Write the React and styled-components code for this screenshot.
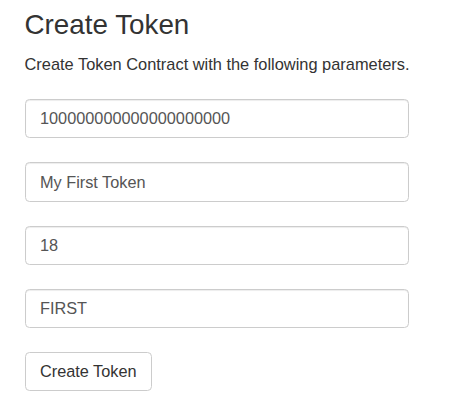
import React from "react";
import styled, { createGlobalStyle } from "styled-components";

const GlobalStyle = createGlobalStyle`
  html, body {
    margin: 0;
    padding: 0;
    background: #fff;
  }
  body {
    font-family: "Liberation Sans", Arial, Helvetica, sans-serif;
    color: #333;
  }
`;

const Page = styled.div`
  width: 384px;
  padding: 9px 0 0 24.5px;
`;

const Title = styled.h3`
  margin: 0;
  font-size: 27.8px;
  line-height: 31px;
  font-weight: 500;
  color: #333;
`;

const Lead = styled.p`
  margin: 12.8px 0 0;
  font-size: 16.4px;
  line-height: 23px;
  white-space: nowrap;
  color: #333;
`;

const Form = styled.form`
  display: flex;
  flex-direction: column;
  align-items: flex-start;
  gap: 23.8px;
  margin-top: 23.2px;
`;

const Input = styled.input`
  box-sizing: border-box;
  width: 100%;
  height: 39.5px;
  padding: 0 14.5px;
  font-family: inherit;
  font-size: 16.3px;
  color: #555;
  background: #fff;
  border: 1px solid #ccc;
  border-radius: 4.5px;
  box-shadow: inset 0 1px 1px rgba(0, 0, 0, 0.075);
  outline: none;
`;

const Button = styled.button`
  box-sizing: border-box;
  height: 39px;
  padding: 0 14.5px;
  font-family: inherit;
  font-size: 16.3px;
  color: #333;
  background: #fff;
  border: 1px solid #ccc;
  border-radius: 4.5px;
  cursor: pointer;
`;

const fields = [
  { name: "supply", value: "100000000000000000000" },
  { name: "name", value: "My First Token" },
  { name: "decimals", value: "18" },
  { name: "symbol", value: "FIRST" },
];

export default function App() {
  return (
    <>
      <GlobalStyle />
      <Page>
        <Title>Create Token</Title>
        <Lead>Create Token Contract with the following parameters.</Lead>
        <Form onSubmit={(e) => e.preventDefault()}>
          {fields.map((f) => (
            <Input key={f.name} name={f.name} defaultValue={f.value} />
          ))}
          <Button type="submit">Create Token</Button>
        </Form>
      </Page>
    </>
  );
}
